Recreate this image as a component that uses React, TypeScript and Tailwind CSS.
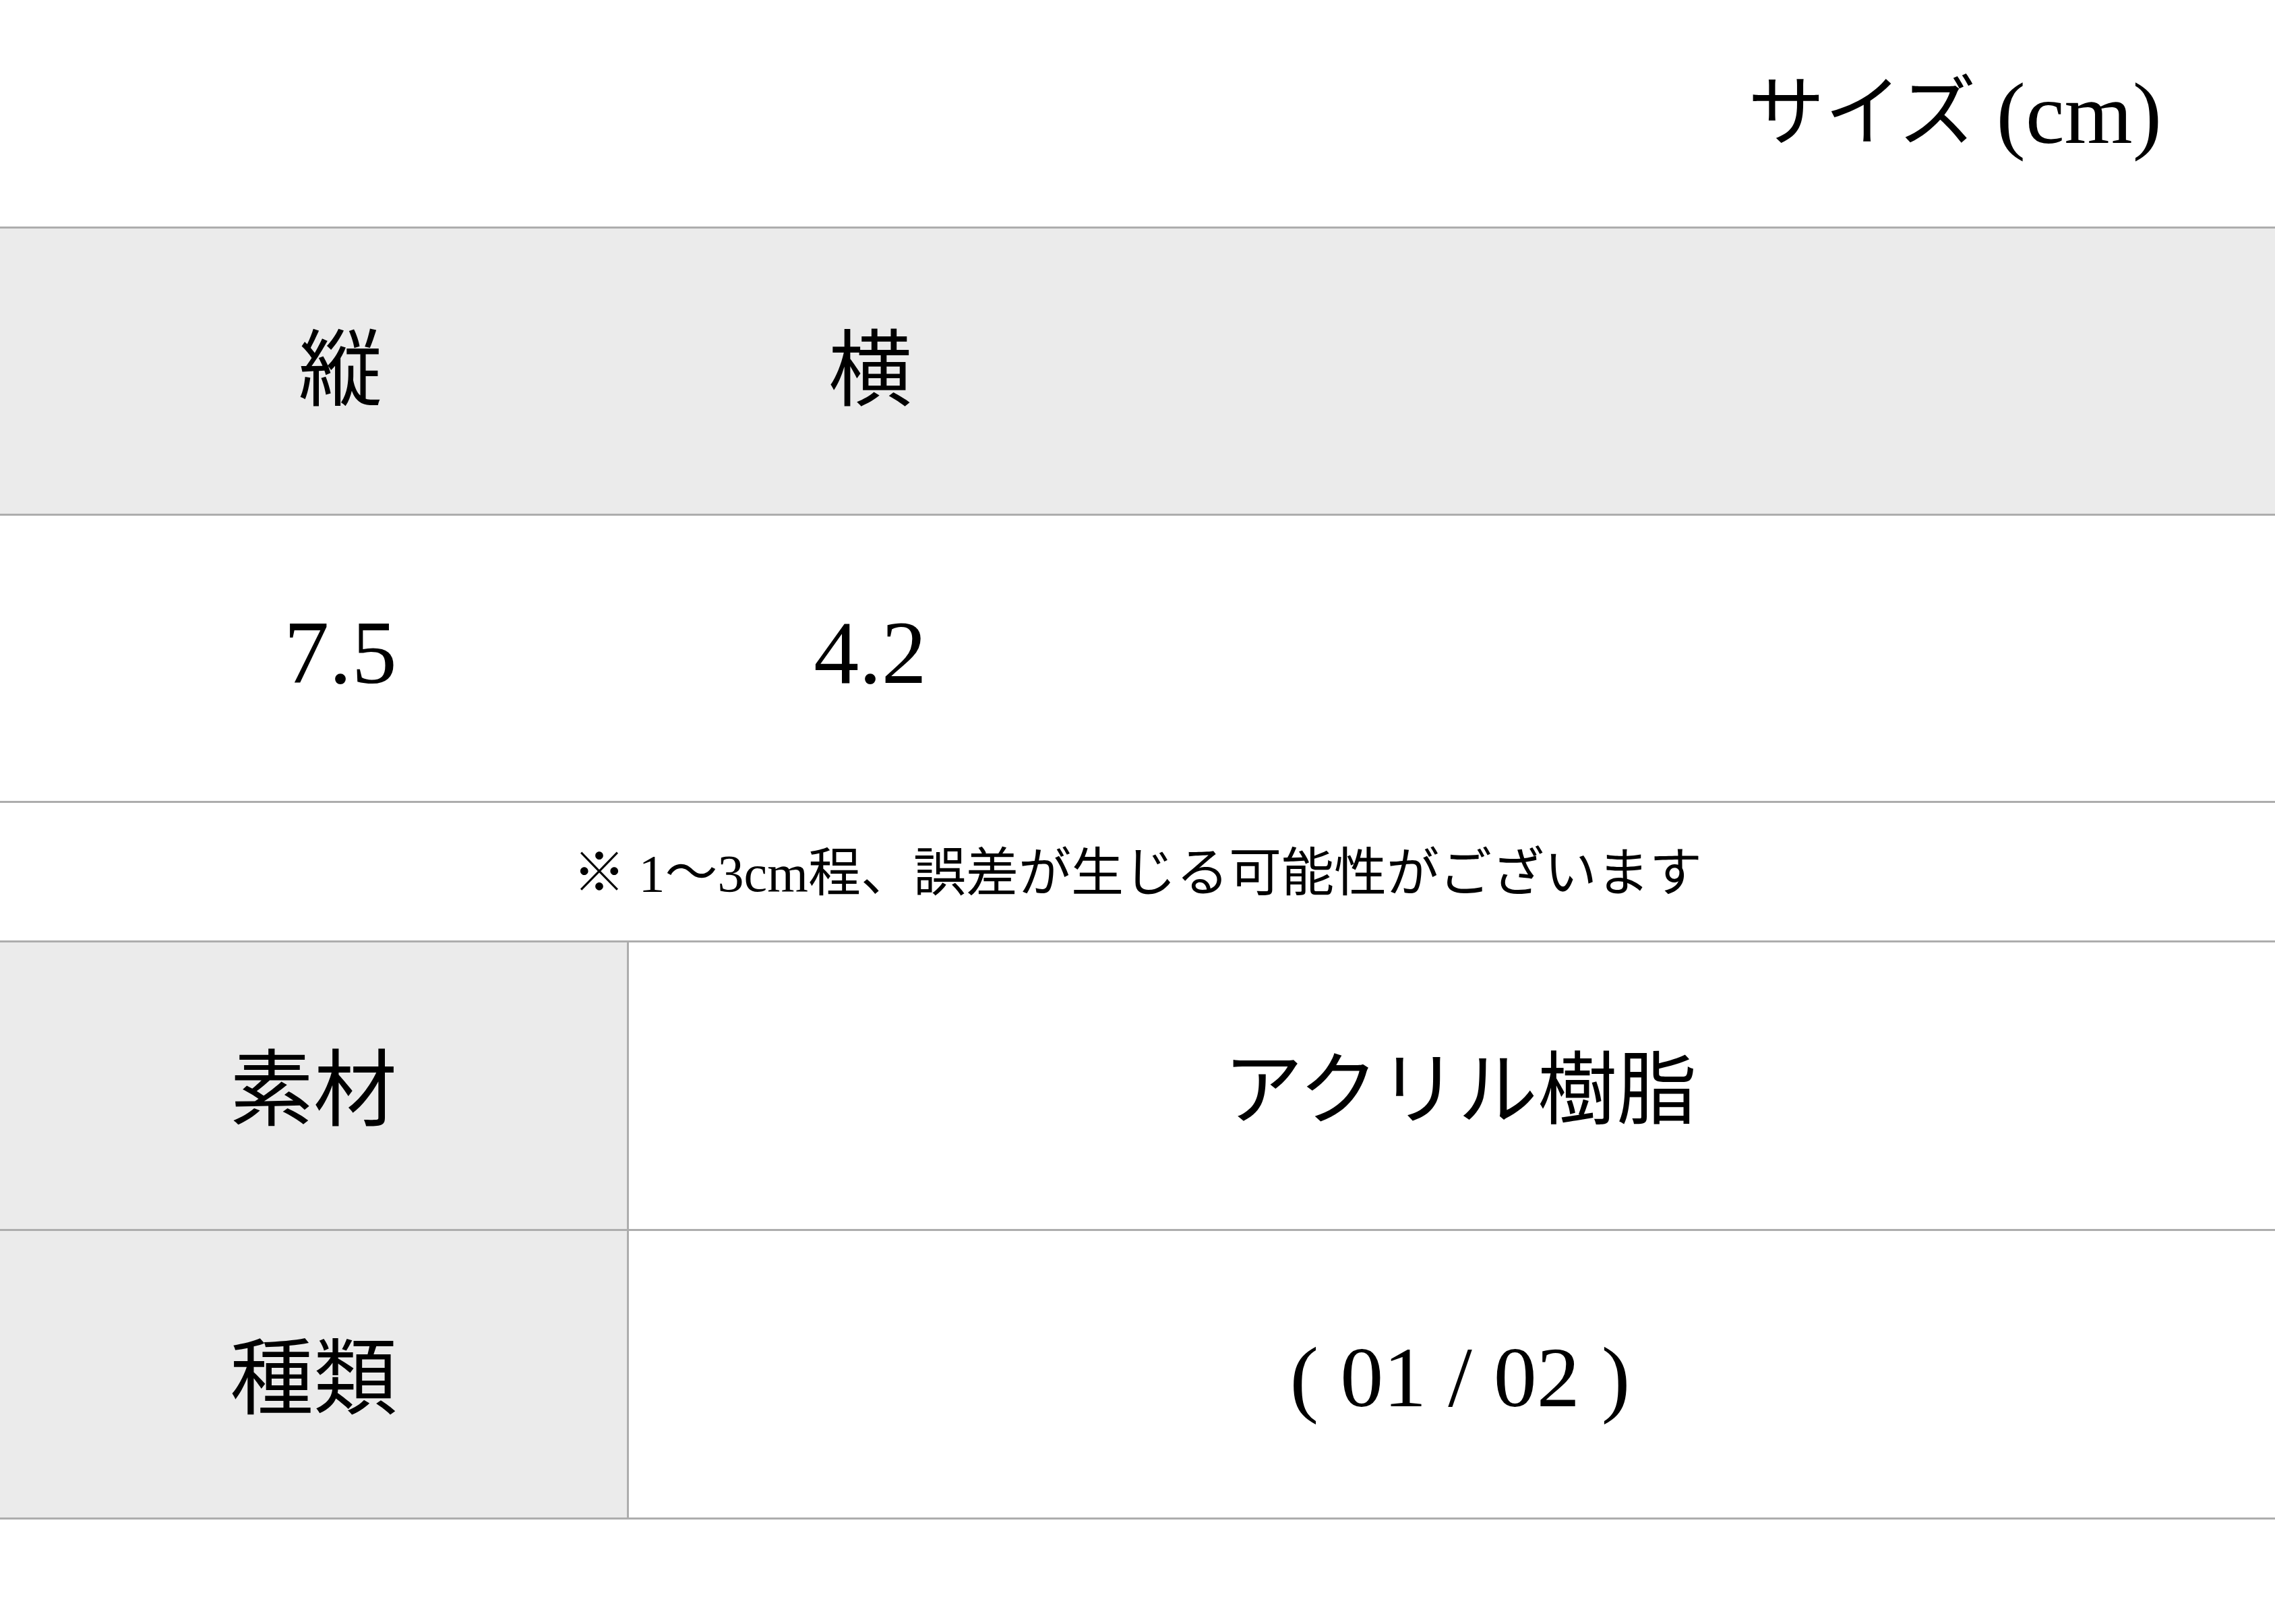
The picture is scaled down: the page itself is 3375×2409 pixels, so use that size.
const serif = "font-['Liberation_Serif','Noto_Sans_CJK_JP',serif]";

function SizeCell({ children }: { children: React.ReactNode }) {
  return (
    <div className="flex w-[786px] items-center justify-center">{children}</div>
  );
}

function SpecRow({
  label,
  value,
  valueClass,
}: {
  label: string;
  value: string;
  valueClass: string;
}) {
  return (
    <div className="flex h-[428px] border-b-[3px] border-[#adadad]">
      <div className="flex w-[933px] items-center justify-center border-r-[3px] border-[#adadad] bg-[#ebebeb] pt-[16px] text-[124px] leading-none">
        {label}
      </div>
      <div
        className={`flex flex-1 items-center justify-center pl-[24px] leading-none ${valueClass}`}
      >
        {value}
      </div>
    </div>
  );
}

export default function App() {
  return (
    <div className={`min-h-[2409px] w-full bg-white text-black ${serif}`}>
      <div className="flex h-[336px] items-center justify-end pr-[168px] leading-none">
        <span className="text-[114px]">サイズ</span>
        <span className="ml-[30px] text-[130px]">(cm)</span>
      </div>

      <div className="flex h-[429px] border-y-[3px] border-[#adadad] bg-[#ebebeb] pl-[112px] text-[124px] leading-none">
        <SizeCell>縦</SizeCell>
        <SizeCell>横</SizeCell>
      </div>

      <div className="flex h-[426px] border-b-[3px] border-[#adadad] pb-[18px] pl-[112px] text-[134px] leading-none">
        <SizeCell>7.5</SizeCell>
        <SizeCell>4.2</SizeCell>
      </div>

      <div className="flex h-[207px] items-center justify-center border-b-[3px] border-[#adadad] pt-[6px] text-[78px] leading-none">
        ※ 1〜3cm程、誤差が生じる可能性がございます
      </div>

      <SpecRow label="素材" value="アクリル樹脂" valueClass="pt-[16px] text-[118px]" />
      <SpecRow label="種類" value="( 01 / 02 )" valueClass="pt-[8px] text-[128px]" />
    </div>
  );
}
